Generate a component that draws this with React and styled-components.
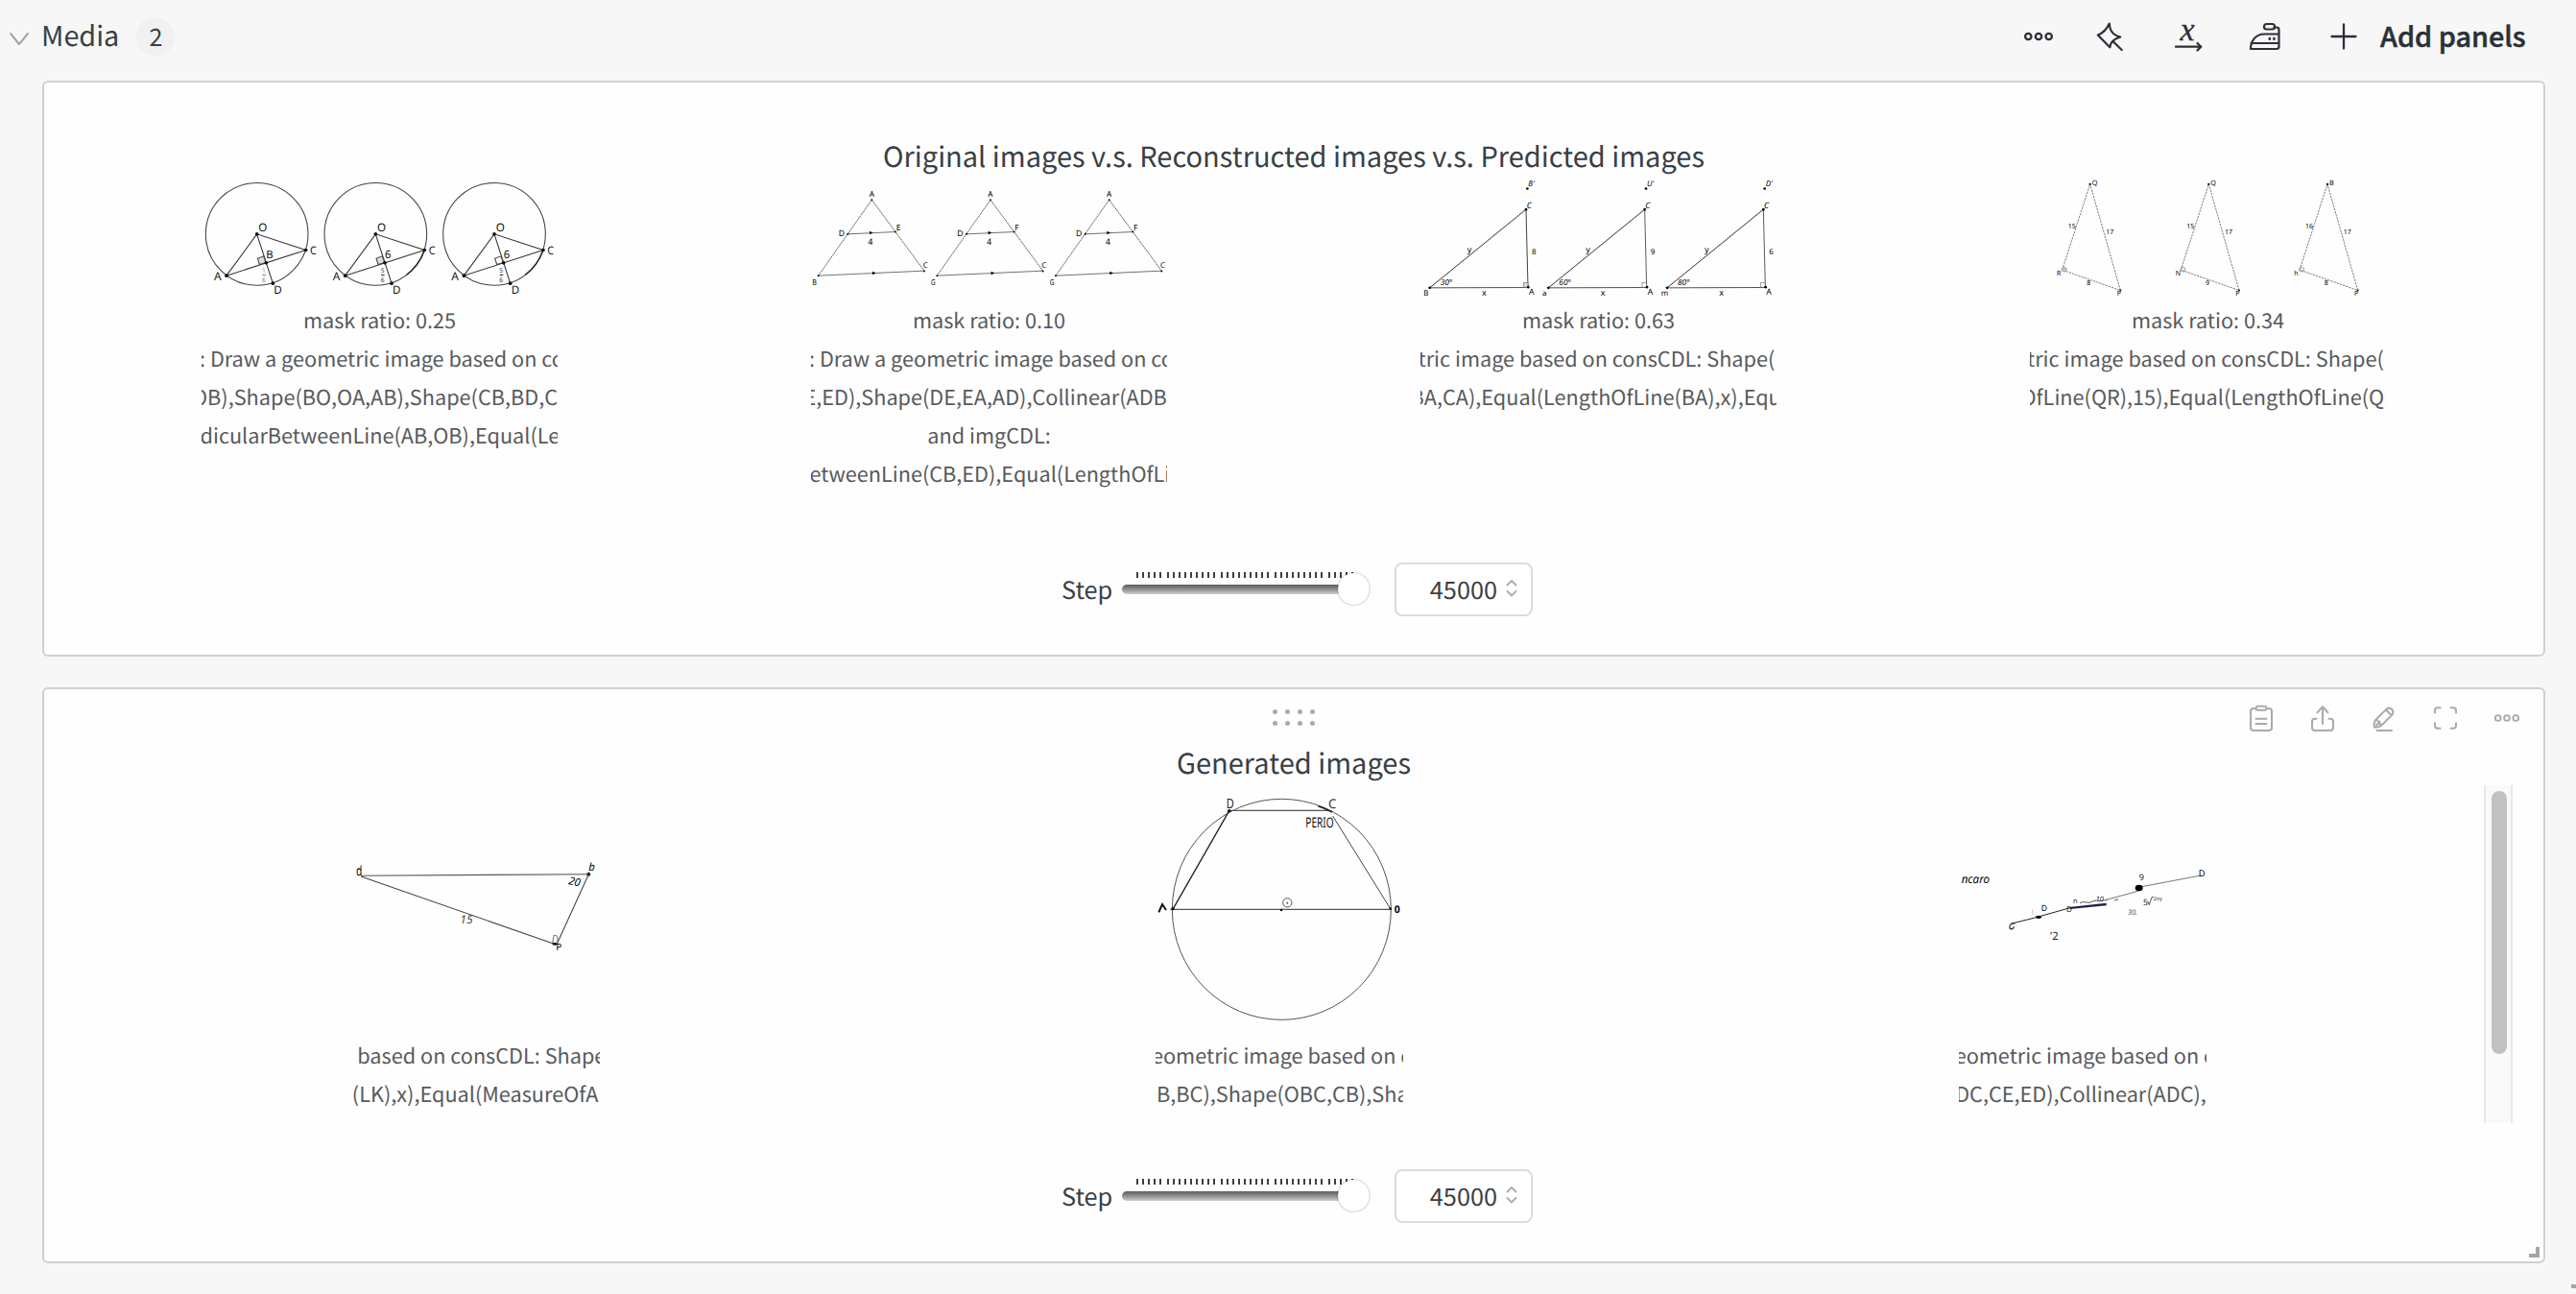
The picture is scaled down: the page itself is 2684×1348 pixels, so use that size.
import React from "react";
import styled, { createGlobalStyle } from "styled-components";

const Global = createGlobalStyle`
  * { box-sizing: border-box; }
  body { margin: 0; background: #f7f7f7; }
`;

const ink = "#3a3f45";
const icon = "#2b3037";
const muted = "#aaaaaa";
const sans = `"Noto Sans CJK SC", "Noto Sans", sans-serif`;

const Page = styled.main`
  position: relative;
  width: 2684px;
  height: 1348px;
  overflow: hidden;
  display: flex;
  flex-direction: column;
  background: #f7f7f7;
  font-family: ${sans};
  text-rendering: geometricPrecision;
  color: ${ink};
`;

const Header = styled.header`
  height: 84px;
  flex: none;
  display: flex;
  align-items: center;
  justify-content: space-between;
  padding: 0 53px 8px 10px;
`;

const HeaderSide = styled.div`
  display: flex;
  align-items: center;
`;

const Heading = styled.h2`
  margin: -2px 0 0 11px;
  font-size: 28.8px;
  font-weight: 400;
  line-height: 40px;
`;

const Count = styled.span`
  width: 40px;
  height: 40px;
  margin-left: 18px;
  border-radius: 20px;
  background: #f1f1f1;
  font-size: 25px;
  line-height: 40px;
  text-align: center;
`;

const IconButton = styled.button`
  display: flex;
  align-items: center;
  justify-content: center;
  width: ${(p) => p.$w}px;
  height: 40px;
  padding: 0;
  border: 0;
  background: none;
  color: ${(p) => p.$color || icon};
`;

const AddButton = styled.button`
  display: flex;
  align-items: center;
  gap: 24px;
  margin-left: 28px;
  padding: 0;
  border: 0;
  background: none;
  color: ${icon};
  font: 500 28.8px/40px ${sans};
`;

const AddText = styled.span`
  width: 151px;
  margin-top: -2px;
  white-space: nowrap;
  text-align: left;
  -webkit-text-stroke: 0.5px ${icon};
`;

const Panels = styled.section`
  display: flex;
  flex-direction: column;
  gap: 32px;
  padding: 0 32px 0 44px;
`;

const Panel = styled.article`
  position: relative;
  height: 600px;
  border: 2px solid #d0d0d0;
  border-radius: 6px;
  background: #fefefe;
`;

const Toolbar = styled.div`
  height: 56px;
  padding-top: 3px;
  display: grid;
  grid-template-columns: 1fr auto 1fr;
  align-items: center;
`;

const DragHandle = styled.div`
  grid-column: 2;
  display: grid;
  grid-template-columns: repeat(4, 5px);
  gap: 7px 8px;
`;

const Dot = styled.i`
  width: 5px;
  height: 5px;
  border-radius: 50%;
  background: ${muted};
`;

const Tools = styled.div`
  grid-column: 3;
  justify-self: end;
  display: flex;
  gap: 24px;
  margin-right: 18px;
`;

const Title = styled.h3`
  margin: 0;
  text-align: center;
  font-size: 29px;
  font-weight: 400;
  line-height: 40px;
`;

const MediaRow = styled.div`
  height: 352px;
  margin: 4px 32px 0;
  display: flex;
`;

const Gallery = styled.div`
  flex: 1;
  display: grid;
  grid-template-columns: repeat(${(p) => p.$cols}, 1fr);
  justify-items: center;
`;

const Card = styled.figure`
  width: ${(p) => p.$w}px;
  margin: 0;
  overflow: hidden;
`;

const Drawing = styled.svg`
  display: block;
  width: 100%;
  height: ${(p) => p.$h}px;
  margin-bottom: 4px;
`;

const Caption = styled.figcaption`
  height: 40px;
  overflow: hidden;
  white-space: pre;
  color: #585a5d;
  font-size: 21.68px;
  line-height: 40px;
  text-align: ${(p) => (p.$start === undefined ? "center" : "left")};
  text-indent: ${(p) => p.$start || 0}px;
`;

const Scrollbar = styled.div`
  width: 30px;
  padding: 6px;
  border: solid #e8e8e8;
  border-width: 0 2px;
  background: #f9f9f9;
`;

const ScrollThumb = styled.div`
  width: 16px;
  height: 274px;
  border-radius: 8px;
  background: #c1c1c1;
`;

const Controls = styled.div`
  display: flex;
  justify-content: center;
  align-items: center;
  height: 56px;
  margin-top: 48px;
  padding-left: 7px;
`;

const StepLabel = styled.label`
  width: 63px;
  font-size: 25.3px;
  line-height: 40px;
`;

const Slider = styled.div`
  position: relative;
  width: 258px;
  height: 36px;
`;

const Ticks = styled.div`
  display: flex;
  gap: 6px;
  height: 6px;
  margin: 0 0 7px 15px;
`;

const TickGroup = styled.div`
  display: flex;
  gap: 4px;
`;

const Tick = styled.i`
  width: 2px;
  height: 6px;
  background: ${ink};
`;

const Track = styled.div`
  height: 10px;
  border-radius: 5px;
  background: linear-gradient(#5c5c5c, #909090 50%, #cfcfcf);
`;

const Thumb = styled.div`
  position: absolute;
  right: 0;
  top: 1px;
  width: 33px;
  height: 33px;
  border-radius: 50%;
  background: #fff;
  box-shadow: 0 0 2px rgba(0, 0, 0, 0.45);
`;

const NumberBox = styled.div`
  display: flex;
  align-items: center;
  justify-content: flex-end;
  width: 144px;
  height: 56px;
  margin-left: 26px;
  padding: 0 14px 0 0;
  border: 2px solid #dcdcdc;
  border-radius: 8px;
  background: #fff;
  font-size: 25.3px;
  line-height: 40px;
  gap: 9px;

  svg { color: ${muted}; margin-top: -3px; }
`;

const Corner = styled.i`
  position: absolute;
  right: ${(p) => p.$right}px;
  bottom: ${(p) => p.$bottom}px;
  width: 11px;
  height: 11px;
  border: solid #a5a5a5;
  border-width: 0 4px 4px 0;
`;

const Svg = ({ w, h, sw = 2, children, ...rest }) => (
  <svg width={w} height={h} viewBox={`0 0 ${w} ${h}`} overflow="visible" fill="none" stroke="currentColor" strokeWidth={sw} strokeLinecap="round" strokeLinejoin="round" {...rest}>
    {children}
  </svg>
);

const MoreIcon = ({ d = 10.7, r = 3.2, sw = 2.3 }) => (
  <Svg w={32} h={32} sw={sw}>
    {[-1, 0, 1].map((i) => <circle key={i} cx={16 + i * d} cy="16" r={r} />)}
  </Svg>
);

const PinIcon = () => (
  <Svg w={32} h={32} sw={2.2}>
    <path d="M15.8 2.500 C13.5 7.500 9 12.500 3.8 14.500 L16.3 27.300 C16.6 23.500 18.5 19 27.3 16.500 L24 15.500 C19 13.500 16 8.500 15.800 2.500Z M20 21.500 L28.700 30" />
  </Svg>
);

const AxisIcon = () => (
  <Svg w={32} h={32} sw={2.2}>
    <text x="7.500" y="20" fill="currentColor" stroke="currentColor" strokeWidth=".3" fontFamily="Liberation Serif, serif" fontStyle="italic" fontSize="34">x</text>
    <path d="M3 26.700 H29 M25.500 23 L29.300 26.700 L25.500 30.400" />
  </Svg>
);

const IronIcon = () => (
  <Svg w={34} h={32} sw={2.2}>
    <path d="M2 29 C2 20 8 13.500 16 13.500 H31.500 M2.500 23 H31.500 M2 29 H29 Q31.500 29 31.500 26.500 V9 Q31.500 6.500 29 6.500 H26.500" />
    <rect x="16" y="3" width="11" height="5.500" rx="2.500" />
    <path d="M21.800 18 v.8 M26.400 18 v.8" strokeWidth="2.600" />
  </Svg>
);

const ClipboardIcon = () => (
  <Svg w={28} h={28}>
    <path d="M8.500 4 H6 Q3 4 3 7 V24 Q3 27 6 27 H22 Q25 27 25 24 V7 Q25 4 22 4 H19.500 M8.500 14.700 H19.500 M8.500 20 H19.500" />
    <rect x="8.700" y="1.800" width="10.600" height="4" rx="1.500" />
  </Svg>
);

const ShareIcon = () => (
  <Svg w={28} h={28}>
    <path d="M7.500 14.700 H6 Q3 14.700 3 17.700 V24 Q3 27 6 27 H22 Q25 27 25 24 V17.700 Q25 14.700 22 14.700 H20.500 M14 20 V2.500 M8.500 8.300 L14 2.300 L19.500 8.300" />
  </Svg>
);

const PencilIcon = () => (
  <Svg w={28} h={28}>
    <path d="M3.800 23.600 Q3 18 5.800 15.300 L16.600 4.600 Q19.600 2.400 22.300 5 Q24.600 7.600 22.400 10.600 L11.800 21.300 Q9 24 3.800 23.600 Z M16 5.500 L21.500 11 M6 15.300 Q9 17 10.500 21.500 M6 21.500 L9.500 18 M6.500 27 H22" />
  </Svg>
);

const FullscreenIcon = () => (
  <Svg w={28} h={28}>
    <path d="M3 8.500 V6 Q3 3.300 5.700 3.300 H8.500 M19.500 3.300 H22.300 Q25 3.300 25 6 V8.500 M25 19.200 V22 Q25 24.700 22.300 24.700 H19.500 M8.500 24.700 H5.700 Q3 24.700 3 22 V19.200" />
  </Svg>
);

const StepperIcon = () => (
  <Svg w={12} h={20} sw={1.8}>
    <path d="M1.500 6.500 L6 2 L10.500 6.500 M1.500 13 L6 17.500 L10.500 13" />
  </Svg>
);

const Label = ({ x, y, s = 30, c = "#222", children, ...rest }) => (
  <text x={x} y={y} fontSize={s} fill={c} stroke="none" fontFamily={`"Noto Sans", sans-serif`} {...rest}>{children}</text>
);

const Repeat = ({ children }) => [0, 1, 2].map((i) => <g key={i} transform={`translate(${i * 371} 0)`}>{children(i)}</g>);

const CircleStrip = () => (
  <Drawing $h={124} viewBox="60 48 1113 371" fill="none" stroke="#444" strokeWidth="3.200">
    <Repeat>
      {(i) => (
        <>
          <circle cx="233" cy="221" r="160" />
          <path d="M138 351 L233 221 L386 271 Z M233 221 L283 375" stroke="#333" />
          {i > 0 && <path d="M385 273 A160 160 0 0 1 330 348" strokeWidth="4" stroke="#222" />}
          <path d="M235 297 L254 290 L261 310 L241 316 Z" fill={i === 2 ? "none" : "#ddd"} />
          {[[233, 221], [386, 271], [138, 351], [262, 311], [283, 375]].map(([x, y]) => <circle key={x} cx={x} cy={y} r="5.500" fill="#111" stroke="none" />)}
          <Label x="238" y="211" s={35} c="#111">O</Label>
          <Label x="399" y="283" s={35} c="#111" textLength="20" lengthAdjust="spacingAndGlyphs">C</Label>
          <Label x="99" y="364" s={36} c="#111">A</Label>
          <Label x="286" y="408" s={35} c="#111">D</Label>
          <Label x="262" y="296" s={34} c="#111">{i ? "6" : "B"}</Label>
          <Label x="249" y="342" s={20} c={i ? "#333" : "#888"}>{i ? "5" : "1"}</Label>
          <path d="M250 349 h11" stroke={i ? "#333" : "#888"} />
          <Label x="249" y="371" s={20} c={i ? "#333" : "#888"}>6</Label>
        </>
      )}
    </Repeat>
  </Drawing>
);

const ParallelStrip = () => (
  <Drawing $h={124} viewBox="75 168 1113 371" fill="none" stroke="#333" strokeWidth="2.500">
    <Repeat>
      {(i) => (
        <>
          <path d="M98 471 L265 234 L429 456" strokeDasharray="5 2" />
          <path d="M190 341 L340 334 M98 471 L429 456" stroke="#555" />
          <path d="M258 332 L269 337 L258 342 Z M267 458 L278 463 L267 468 Z" fill="#000" stroke="none" />
          {[[98, 471], [265, 234], [429, 457], [190, 341], [339, 334]].map(([x, y]) => <circle key={x} cx={x} cy={y} r="3" fill="#111" stroke="none" />)}
          <Label x="257" y="225" s={25} c="#000">A</Label>
          <Label x="161" y="346" s={26} c="#000">D</Label>
          <Label x="341" y="330" s={25} c="#000">{i ? "F" : "E"}</Label>
          <Label x="253" y="373" s={27} c="#000">4</Label>
          <Label x="425" y="446" s={24} c="#000" textLength="15" lengthAdjust="spacingAndGlyphs">C</Label>
          <Label x="79" y="500" s={25} c="#000" textLength="14" lengthAdjust="spacingAndGlyphs">{i ? "G" : "B"}</Label>
        </>
      )}
    </Repeat>
  </Drawing>
);

const RightTriangleStrip = () => (
  <Drawing $h={124} viewBox="90 48 1113 371" fill="none" stroke="#222" strokeWidth="2.800">
    <Repeat>
      {(i) => (
        <>
          <path d="M119 389 L420 144" />
          <path d="M420 144 L426 387" stroke={i ? "#5a4a44" : "#333"} />
          <path d="M119 389 L426 388" stroke="#444" />
          <rect x="412" y="373" width="14" height="14" fill={i ? "none" : "#ddd"} stroke="#776" strokeWidth="2" />
          {[[119, 389], [420, 144], [427, 387], [424, 79]].map(([x, y]) => <circle key={x} cx={x} cy={y} r="4" fill="#000" stroke="none" />)}
          <Label x="427" y="71" s={24} c="#000" fontStyle="italic">{["B'", "U'", "D'"][i]}</Label>
          <Label x="422" y="139" s={26} c="#000" fontStyle="italic" textLength="15" lengthAdjust="spacingAndGlyphs">C</Label>
          <Label x="236" y="277" s={27} c="#000">y</Label>
          <Label x="438" y="283" s={24} c="#000">{["8", "9", "6"][i]}</Label>
          <Label x="152" y="381" s={25} c="#000" fontStyle="italic">{["30°", "60°", "80°"][i]}</Label>
          <Label x="100" y="413" s={24} c="#000">{["B", "a", "m"][i]}</Label>
          <Label x="429" y="409" s={26} c="#000">A</Label>
          <Label x="282" y="413" s={27} c="#000">x</Label>
        </>
      )}
    </Repeat>
  </Drawing>
);

const ThinTriangleStrip = () => (
  <Drawing $h={124} viewBox="105 48 1113 371" fill="none" stroke="#555" strokeWidth="2.300">
    <Repeat>
      {(i) => (
        <>
          <path d="M206 333 L293 65 L388 397 Z" strokeDasharray="7 3" />
          <path d="M208 324 L220 328 L216 339 L204 335Z" fill={i ? "none" : "#ccc"} stroke="#888" />
          <circle cx="293" cy="65" r="3.500" fill="#111" stroke="none" />
          <circle cx="388" cy="397" r="3" fill="#111" stroke="none" />
          <Label x="299" y="68" s={22} c="#000">{["Q", "Q", "B"][i]}</Label>
          <Label x="224" y="202" s={21} c="#000">{i === 2 ? "16" : "15"}</Label>
          <Label x="343" y="221" s={21} c="#000">17</Label>
          <Label x="189" y="350" s={21} c="#000">{["R", "N", "h"][i]}</Label>
          <Label x="283" y="381" s={21} c="#000">{["8", "9", "8"][i]}</Label>
          <Label x="377" y="413" s={21} c="#000">P</Label>
        </>
      )}
    </Repeat>
  </Drawing>
);

const TriangleDrawing = () => (
  <Drawing $h={258} viewBox="81 -6 774 774" fill="none" stroke="#555" strokeWidth="3.200">
    <path d="M108 277 L820 272" />
    <path d="M108 279 L718 492 M820 272 L720 492" stroke="#444" />
    <path d="M707 488 L711 464 Q720 460 723 472 L722 484" stroke="#777" />
    <circle cx="820" cy="272" r="5" fill="#000" />
    <ellipse cx="714" cy="490" rx="8" ry="4" fill="#111" stroke="none" />
    <Label x="93" y="276" s={42} c="#000" textLength="19" lengthAdjust="spacingAndGlyphs">d</Label>
    <Label x="820" y="260" s={34} c="#000" fontStyle="italic">b</Label>
    <Label x="755" y="303" s={34} c="#000" fontStyle="italic" transform="rotate(12 755 303)">20</Label>
    <Label x="418" y="427" s={36} fontStyle="italic" c="#444">15</Label>
    <Label x="718" y="511" s={30} c="#000">P</Label>
  </Drawing>
);

const InscribedDrawing = () => (
  <Drawing $h={258} viewBox="72 144 774 774" fill="none" stroke="#555" strokeWidth="3">
    <ellipse cx="466" cy="532" rx="342" ry="345" />
    <path d="M118 532 H806 M304 223 H612" strokeWidth="3.500" />
    <path d="M127 530 L302 224" stroke="#222" strokeWidth="4" />
    <path d="M626 240 L806 530" stroke="#444" />
    <path d="M580 209 Q605 217 624 228" stroke="#222" strokeWidth="4.500" />
    <circle cx="302" cy="224" r="5" fill="#111" stroke="none" />
    <circle cx="806" cy="530" r="4" fill="#111" stroke="none" />
    <circle cx="126" cy="530" r="5" fill="#111" stroke="none" />
    <circle cx="465" cy="534" r="4" fill="#111" stroke="none" />
    <circle cx="484" cy="511" r="14" />
    <circle cx="484" cy="512" r="2.500" fill="#333" stroke="none" />
    <path d="M82 541 L93 516 L105 534" stroke="#111" strokeWidth="6" />
    <Label x="293" y="216" s={42} c="#222" textLength="24" lengthAdjust="spacingAndGlyphs">D</Label>
    <Label x="612" y="215" s={40} c="#333">C</Label>
    <Label x="541" y="276" s={44} c="#111" textLength="88" lengthAdjust="spacingAndGlyphs">PERIO</Label>
    <Label x="818" y="544" s={32} c="#000" fontWeight="700" textLength="18" lengthAdjust="spacingAndGlyphs">0</Label>
  </Drawing>
);

const SegmentDrawing = () => (
  <Drawing $h={258} viewBox="92 -6 774 774" fill="none" stroke="#333" strokeWidth="3">
    <path d="M258 426 L330 408 L440 377" stroke="#222" />
    <path d="M436 375 L553 362 L553 370 L440 381Z" stroke="none" fill="#1c2440" />
    <path d="M553 352 L655 324 M664 311 L848 276" stroke="#777" />
    <path d="M470 362 q10 -6 20 -2 q12 3 22 -4 q10 -4 22 0 l22 -4 M578 354 l12 -4" strokeWidth="2.500" />
    <path d="M268 426 Q248 424 251 441 Q258 448 265 437" stroke="#1c2440" strokeWidth="3.500" />
    <path d="M322 382 V398" stroke="#aaa" strokeWidth="2" />
    <ellipse cx="341" cy="406" rx="9" ry="5" fill="#000" stroke="none" />
    <ellipse cx="655" cy="315" rx="12" ry="10" fill="#000" stroke="none" />
    <Label x="100" y="299" s={37} c="#000" fontStyle="italic" textLength="88" lengthAdjust="spacingAndGlyphs">ncaro</Label>
    <Label x="349" y="386" s={26} c="#000">D</Label>
    <Label x="428" y="391" s={24}>D</Label>
    <Label x="449" y="364" s={22}>n</Label>
    <Label x="520" y="356" s={22} fontStyle="italic">10</Label>
    <Label x="655" y="291" s={27}>9</Label>
    <Label x="841" y="280" s={28} c="#000">D</Label>
    <Label x="376" y="477" s={34} c="#222">'2</Label>
    <Label x="619" y="399" s={23} c="#555" fontStyle="italic">30.</Label>
    <Label x="668" y="370" s={26} c="#333">5</Label>
    <path d="M682 356 l5 12 l8 -24 h6" strokeWidth="2.500" />
    <Label x="700" y="354" s={17} c="#333">2xy</Label>
  </Drawing>
);

const comparisons = [
  { art: CircleStrip, lines: [["mask ratio: 0.25"], [": Draw a geometric image based on consCDL", -2], ["OB),Shape(BO,OA,AB),Shape(CB,BD,CD)", -10], ["dicularBetweenLine(AB,OB),Equal(Length", -1.5]] },
  { art: ParallelStrip, lines: [["mask ratio: 0.10"], [": Draw a geometric image based on consCDL", -2], ["E,ED),Shape(DE,EA,AD),Collinear(ADB)", -7.5], ["and imgCDL:"], ["etweenLine(CB,ED),Equal(LengthOfLine", -1.5]] },
  { art: RightTriangleStrip, lines: [["mask ratio: 0.63"], ["tric image based on consCDL: Shape(", -2.5], ["BA,CA),Equal(LengthOfLine(BA),x),Equal", -10.5]] },
  { art: ThinTriangleStrip, lines: [["mask ratio: 0.34"], ["tric image based on consCDL: Shape(", -3], ["OfLine(QR),15),Equal(LengthOfLine(QP", -9.5]] },
];

const generated = [
  { art: TriangleDrawing, lines: [["based on consCDL: Shape(", 5], ["(LK),x),Equal(MeasureOfAngle", -0.5]] },
  { art: InscribedDrawing, lines: [["eometric image based on consCDL", -4], ["OB,BC),Shape(OBC,CB),Shape", -15]] },
  { art: SegmentDrawing, lines: [["eometric image based on consCDL", -4], ["DC,CE,ED),Collinear(ADC),", -3.5]] },
];

const Cards = ({ items, width }) => (
  <Gallery $cols={items.length}>
    {items.map(({ art: Art, lines }, i) => (
      <Card key={i} $w={width}>
        <Art />
        {lines.map(([text, start], j) => <Caption key={j} $start={start}>{text}</Caption>)}
      </Card>
    ))}
  </Gallery>
);

const StepControl = () => (
  <Controls>
    <StepLabel>Step</StepLabel>
    <Slider>
      <Ticks>
        {[5, 9, 9, 9, 5].map((n, g) => (
          <TickGroup key={g}>{Array.from({ length: n }, (_, i) => <Tick key={i} />)}</TickGroup>
        ))}
      </Ticks>
      <Track />
      <Thumb />
    </Slider>
    <NumberBox>45000<StepperIcon /></NumberBox>
  </Controls>
);

export default function App() {
  return (
    <Page>
      <Global />
      <Header>
        <HeaderSide>
          <Svg w={22} h={14} sw={2} stroke="#a5a5a5"><path d="M1 4 L10 15 L19 4" /></Svg>
          <Heading>Media</Heading>
          <Count>2</Count>
        </HeaderSide>
        <HeaderSide>
          <IconButton $w={64}><MoreIcon /></IconButton>
          <IconButton $w={84}><PinIcon /></IconButton>
          <IconButton $w={80}><AxisIcon /></IconButton>
          <IconButton $w={80}><IronIcon /></IconButton>
          <AddButton>
            <Svg w={28} h={28} sw={2.3}><path d="M14 1.500 V26.500 M1.500 14 H26.500" /></Svg>
            <AddText>Add panels</AddText>
          </AddButton>
        </HeaderSide>
      </Header>
      <Panels>
        <Panel>
          <Toolbar />
          <Title>Original images v.s. Reconstructed images v.s. Predicted images</Title>
          <MediaRow><Cards items={comparisons} width={371} /></MediaRow>
          <StepControl />
        </Panel>
        <Panel>
          <Toolbar>
            <DragHandle>{Array.from({ length: 8 }, (_, i) => <Dot key={i} />)}</DragHandle>
            <Tools>
              <IconButton $w={40} $color={muted}><ClipboardIcon /></IconButton>
              <IconButton $w={40} $color={muted}><ShareIcon /></IconButton>
              <IconButton $w={40} $color={muted}><PencilIcon /></IconButton>
              <IconButton $w={40} $color={muted}><FullscreenIcon /></IconButton>
              <IconButton $w={40} $color={muted}><MoreIcon d={9.3} r={2.9} sw={1.9} /></IconButton>
            </Tools>
          </Toolbar>
          <Title>Generated images</Title>
          <MediaRow>
            <Cards items={generated} width={258} />
            <Scrollbar><ScrollThumb /></Scrollbar>
          </MediaRow>
          <StepControl />
          <Corner $right={4} $bottom={4} />
        </Panel>
      </Panels>
      <Corner $right={-6} $bottom={6} />
    </Page>
  );
}
